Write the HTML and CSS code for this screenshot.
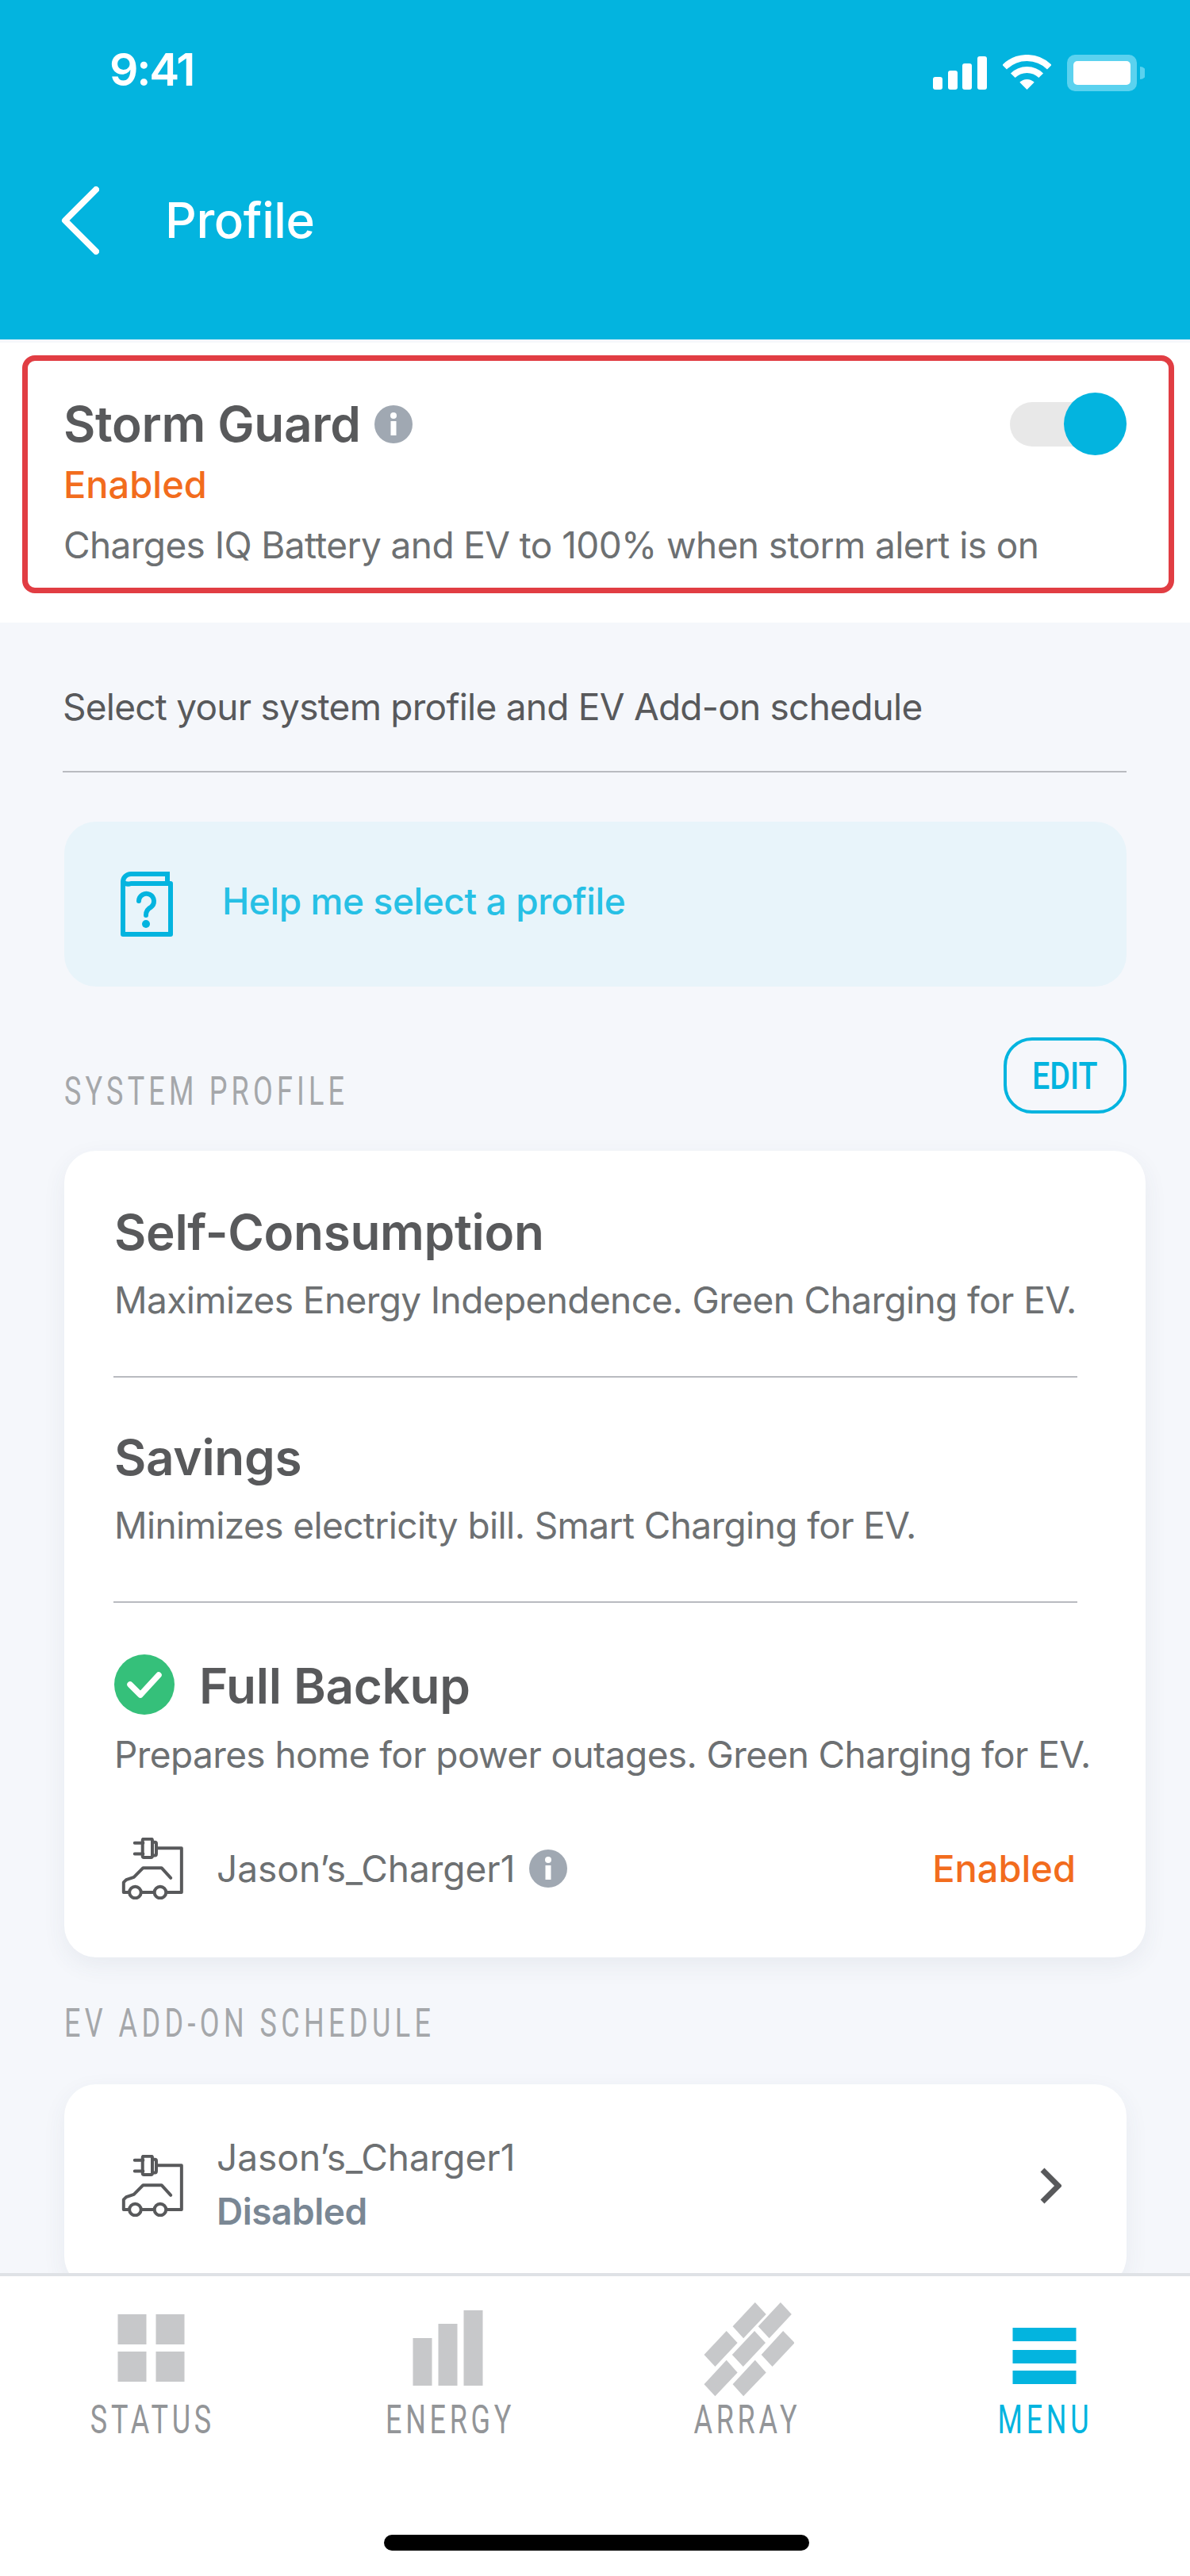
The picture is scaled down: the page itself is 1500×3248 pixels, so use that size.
FILE: index.html
```html
<!DOCTYPE html>
<html lang="en">
<head>
<meta charset="utf-8">
<title>Profile</title>
<link rel="stylesheet" href="styles.css">
</head>
<body>
<div class="page">
  <header class="header">
    <div class="statusbar">
      <span class="time">9:41</span>
      <div class="status-icons">
        <svg class="signal" width="68" height="42" viewBox="0 0 68 42"><rect x="0" y="26" width="12" height="16" rx="3"/><rect x="19" y="18" width="12" height="24" rx="3"/><rect x="37" y="9" width="12" height="33" rx="3"/><rect x="56" y="0" width="12" height="42" rx="3"/></svg>
        <svg class="wifi" width="61" height="44" viewBox="0 0 61 44"><path d="M2.2 15.7A40 40 0 0 1 58.8 15.7" fill="none" stroke="#fff" stroke-width="8"/><path d="M12.8 26.3A25 25 0 0 1 48.2 26.3" fill="none" stroke="#fff" stroke-width="8"/><path d="M30.5 44L21.3 34.8A13 13 0 0 1 39.7 34.8Z" fill="#fff"/></svg>
        <svg class="battery" width="98" height="46" viewBox="0 0 98 46"><rect width="88" height="46" rx="10" fill="#5bd2ef"/><rect x="8" y="8" width="72" height="30" rx="5" fill="#fff"/><path d="M92 15a8 8 0 0 1 0 16z" fill="#5bd2ef"/></svg>
      </div>
    </div>
    <div class="navbar">
      <svg class="back" width="48" height="86" viewBox="0 0 48 86"><path d="M44 4L5 43L44 82" fill="none" stroke="#fff" stroke-width="8" stroke-linecap="round" stroke-linejoin="round"/></svg>
      <h1 class="nav-title">Profile</h1>
    </div>
  </header>

  <section class="storm-wrap">
    <div class="storm">
      <div class="storm-top">
        <div class="title-line">
          <h2 class="title">Storm Guard</h2>
          <svg class="info" width="48" height="48" viewBox="0 0 48 48"><circle cx="24" cy="24" r="24" fill="#a0a8b2"/><circle cx="24" cy="13" r="4" fill="#fff"/><rect x="20.500" y="20" width="7" height="18" fill="#fff"/></svg>
        </div>
        <div class="toggle"><span class="knob"></span></div>
      </div>
      <div class="enabled storm-enabled">Enabled</div>
      <div class="desc storm-desc">Charges IQ Battery and EV to 100% when storm alert is on</div>
    </div>
  </section>

  <main class="main">
    <p class="intro">Select your system profile and EV Add-on schedule</p>

    <div class="help">
      <svg class="book" width="66" height="82" viewBox="0 0 66 82" fill="none" stroke="#03b4df" stroke-width="6"><path d="M3 13a10 10 0 0 1 10-10H59V15"/><path d="M3 13V79H63V15H13A10 10 0 0 1 3 13Z" stroke-linejoin="round"/><path d="M23 37a9.500 9.500 0 1 1 15 8q-6 3-6 10" stroke-linecap="round"/><circle cx="32" cy="66" r="5" fill="#03b4df" stroke="none"/></svg>
      <span class="help-text">Help me select a profile</span>
    </div>

    <div class="section-head">
      <span class="section-label system-label">SYSTEM PROFILE</span>
      <span class="edit"><span class="edit-text">EDIT</span></span>
    </div>

    <div class="card profiles">
      <div class="profile profile-one">
        <h3 class="title">Self-Consumption</h3>
        <p class="desc">Maximizes Energy Independence. Green Charging for EV.</p>
      </div>
      <div class="profile profile-two">
        <h3 class="title">Savings</h3>
        <p class="desc">Minimizes electricity bill. Smart Charging for EV.</p>
      </div>
      <div class="profile profile-three">
        <div class="selected-title">
          <svg class="check" width="76" height="76" viewBox="0 0 76 76"><circle cx="38" cy="38" r="38" fill="#35c07a"/><path d="M20 38L33 51L56 26" fill="none" stroke="#fff" stroke-width="7.500" stroke-linecap="round" stroke-linejoin="round"/></svg>
          <h3 class="title">Full Backup</h3>
        </div>
        <p class="desc">Prepares home for power outages. Green Charging for EV.</p>
        <div class="charger">
          <svg class="car" width="78" height="78" viewBox="68 50 234 235" fill="none" stroke="#58595b" stroke-width="12" stroke-linecap="round" stroke-linejoin="round"><path d="M118 70H150M118 112H150"/><rect x="148" y="55" width="37" height="70" rx="5"/><path d="M185 67H195Q200 67 200 72V112Q200 118 195 118H185"/><path d="M200 90H296V258H242"/><circle cx="120" cy="258" r="22"/><circle cx="215" cy="258" r="22"/><path d="M143 258H192"/><path d="M96 258H76V220L86 210L115 200L150 165H220L255 203"/></svg>
          <span class="charger-name">Jason’s_Charger1</span>
          <svg class="info" width="48" height="48" viewBox="0 0 48 48"><circle cx="24" cy="24" r="24" fill="#a0a8b2"/><circle cx="24" cy="13" r="4" fill="#fff"/><rect x="20.500" y="20" width="7" height="18" fill="#fff"/></svg>
          <span class="enabled charger-status">Enabled</span>
        </div>
      </div>
    </div>

    <div class="ev-label"><span class="section-label">EV ADD-ON SCHEDULE</span></div>

    <div class="card schedule">
      <svg class="car" width="78" height="78" viewBox="68 50 234 235" fill="none" stroke="#58595b" stroke-width="12" stroke-linecap="round" stroke-linejoin="round"><path d="M118 70H150M118 112H150"/><rect x="148" y="55" width="37" height="70" rx="5"/><path d="M185 67H195Q200 67 200 72V112Q200 118 195 118H185"/><path d="M200 90H296V258H242"/><circle cx="120" cy="258" r="22"/><circle cx="215" cy="258" r="22"/><path d="M143 258H192"/><path d="M96 258H76V220L86 210L115 200L150 165H220L255 203"/></svg>
      <div class="schedule-text">
        <div class="charger-name">Jason’s_Charger1</div>
        <div class="disabled">Disabled</div>
      </div>
      <svg class="chevron" width="28" height="48" viewBox="0 0 28 48"><path d="M4 4L24 24L4 44" fill="none" stroke="#58595b" stroke-width="7" stroke-linejoin="miter"/></svg>
    </div>
  </main>

  <nav class="tabs">
    <div class="tab">
      <svg class="tab-icon" width="120" height="120" viewBox="0 0 120 120"><rect x="17.500" y="15" width="36" height="38"/><rect x="65.500" y="15" width="36" height="38"/><rect x="17.500" y="62" width="36" height="38"/><rect x="65.500" y="62" width="36" height="38"/></svg>
      <span class="tab-label">STATUS</span>
    </div>
    <div class="tab">
      <svg class="tab-icon" width="120" height="120" viewBox="0 0 120 120"><rect x="14.500" y="45" width="24" height="60"/><rect x="46.500" y="27" width="24" height="78"/><rect x="78.500" y="10" width="24" height="95"/></svg>
      <span class="tab-label">ENERGY</span>
    </div>
    <div class="tab">
      <svg class="tab-icon" width="120" height="120" viewBox="0 0 120 120"><g transform="translate(6.500 0) scale(0.357) translate(-131 -68)"><polygon points="311,68 350,110 270,195 232,153"/><polygon points="401,68 440,110 361,195 322,153"/><polygon points="210,169 249,211 170,295 131,253"/><polygon points="309,169 348,211 269,295 230,253"/><polygon points="410,169 451,211 372,295 333,253"/><polygon points="210,272 249,316 170,399 131,357"/><polygon points="311,272 350,316 270,399 232,357"/></g></svg>
      <span class="tab-label">ARRAY</span>
    </div>
    <div class="tab tab-active">
      <svg class="tab-icon" width="120" height="120" viewBox="0 0 120 120"><rect x="20.500" y="32" width="80" height="17"/><rect x="20.500" y="60" width="80" height="17"/><rect x="20.500" y="86" width="80" height="17"/></svg>
      <span class="tab-label">MENU</span>
    </div>
    <span class="home-indicator"></span>
  </nav>
</div>
</body>
</html>
```
FILE: styles.css
```css
* { box-sizing: border-box; }
html, body { margin: 0; padding: 0; }
body { font-family: "Inter", "Liberation Sans", sans-serif; color: #58595b; background: #fff; }
h1, h2, h3, p { margin: 0; font-weight: inherit; font-size: inherit; }

.page { width: 1500px; height: 3248px; display: flex; flex-direction: column; overflow: hidden; }

/* Header */
.header { height: 428px; background: #03b4df; color: #fff; flex: none; }
.statusbar { height: 174px; display: flex; align-items: center; justify-content: space-between; padding: 0 57px 0 138px; }
.time { font-size: 57px; font-weight: 600; letter-spacing: -2.200px; }
.status-icons { display: flex; align-items: flex-start; padding-top: 10px; }
.signal { fill: #fff; margin-top: 2px; margin-right: 20px; }
.wifi { margin-right: 20px; }
.nav-title { font-size: 62px; line-height: 70px; font-weight: 500; letter-spacing: -.4px; margin-left: 83px; }
.navbar { height: 208px; display: flex; align-items: center; padding-left: 77px; }

/* Storm guard */
.storm-wrap { height: 357px; flex: none; background: #fff; border-top: 4px solid #f5f7fb; padding: 16px 20px 0 28px; }
.storm { height: 300px; border: 7px solid #e13d43; border-radius: 16px; padding: 50px 53px 0 45px; }
.storm-top { display: flex; align-items: center; justify-content: space-between; height: 60px; }
.title-line { display: flex; align-items: center; gap: 17px; }
.title { font-size: 62px; line-height: 60px; font-weight: 600; letter-spacing: -.3px; color: #58595b; white-space: nowrap; }
.toggle { position: relative; width: 147px; height: 56px; border-radius: 28px; background: #e8e8e8; }
.knob { position: absolute; right: 0; top: -12px; width: 79px; height: 79px; border-radius: 50%; background: #03b4df; }
.enabled { font-size: 47px; line-height: 60px; font-weight: 500; color: #f26c1d; }
.storm-enabled { margin-top: 16px; }
.desc { font-size: 46px; line-height: 60px; letter-spacing: -.6px; color: #6d7072; white-space: nowrap; }
.storm-desc { margin-top: 16px; }

/* Main */
.main { flex: 1; min-height: 0; overflow: hidden; background: #f5f7fb; padding: 76px 80px 0 81px; }
.intro { margin-left: -2px; font-size: 46px; line-height: 60px; letter-spacing: -.75px; padding-bottom: 51px; border-bottom: 2px solid #b9bbc0; color: #58595b; }
.help { margin-top: 62px; height: 208px; border-radius: 40px; background: #e8f4fa; display: flex; align-items: center; padding-left: 71px; gap: 62px; }
.help-text { font-size: 46px; font-weight: 500; letter-spacing: -.4px; color: #27c0e5; padding-bottom: 8px; }
.section-head { margin-top: 64px; display: flex; align-items: flex-end; justify-content: space-between; }
.section-label { display: inline-block; font-family: "Roboto", sans-serif; font-size: 50px; line-height: 60px; letter-spacing: 7.500px; color: #a5a7aa; transform: scaleX(.72); transform-origin: left center; white-space: nowrap; }
.system-label { margin-bottom: -2px; letter-spacing: 7.200px; }
.edit { width: 155px; height: 96px; border: 4px solid #03b4df; border-radius: 36px; display: flex; align-items: center; justify-content: center; }
.edit-text { font-family: "Roboto", sans-serif; font-size: 48px; font-weight: 500; color: #03b4df; transform: scaleX(.82); }

.card { background: #fff; border-radius: 40px; box-shadow: 0 10px 30px rgba(60, 70, 100, .07); }
.profiles { margin-top: 47px; height: 1017px; margin-right: -24px; padding: 0 86px 0 63px; }
.profile-one { padding: 73px 0 66px; border-bottom: 2px solid #b9bbc0; margin-left: -1px; padding-left: 1px; }
.profile-two { padding: 71px 0 66px; border-bottom: 2px solid #b9bbc0; margin-left: -1px; padding-left: 1px; }
.profile-one .desc { margin-top: 25px; }
.profile-two .desc { margin-top: 25px; }
.profile-three { padding-top: 73px; }
.profile-three .desc { margin-top: 28px; }
.selected-title { display: flex; align-items: center; gap: 31px; height: 60px; }
.selected-title .title { padding-top: 4px; }
.check { flex: none; }
.charger { margin-top: 75px; display: flex; align-items: center; height: 78px; padding-left: 9px; }
.charger-name { font-size: 46px; line-height: 60px; color: #6d7072; }
.charger .charger-name { margin-left: 42px; margin-right: 18px; }
.charger-status { margin-left: auto; margin-right: 2px; }

.ev-label { margin-top: 53px; height: 60px; }
.schedule { margin-top: 47px; height: 257px; display: flex; align-items: flex-start; padding: 62px 82px 0 72px; }
.schedule .car { margin-top: 27px; }
.schedule-text { margin-left: 42px; }
.disabled { font-size: 46px; line-height: 60px; font-weight: 600; letter-spacing: -.5px; color: #7a8794; margin-top: 8px; }
.chevron { margin-left: auto; margin-top: 42px; }

/* Tabs */
.tabs { position: relative; flex: none; height: 382px; background: #fff; border-top: 4px solid #dfe2e6; display: grid; grid-template-columns: repeat(4, 375px); padding: 33px 0 0 3px; align-content: start; }
.tab { display: flex; flex-direction: column; align-items: center; }
.tab-icon { display: block; fill: #c7c8ca; }
.tab-active .tab-icon { fill: #03b4df; }
.tab-label { display: block; font-family: "Roboto", sans-serif; font-size: 50px; line-height: 56px; letter-spacing: 6.500px; padding-left: 5px; color: #939598; transform: scaleX(.72); }
.tab-active .tab-label { color: #03b4df; }
.home-indicator { position: absolute; left: 484px; top: 326px; width: 536px; height: 20px; border-radius: 10px; background: #000; }
```
